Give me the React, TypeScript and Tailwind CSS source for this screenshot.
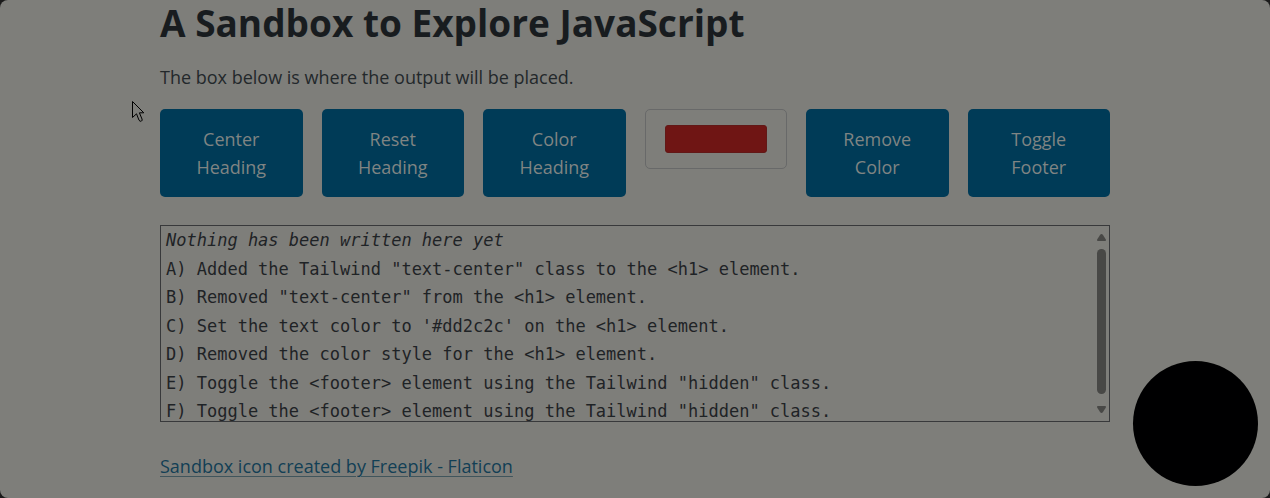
import React, { useState } from "react";

const LOG_LINES = [
  'A) Added the Tailwind "text-center" class to the <h1> element.',
  'B) Removed "text-center" from the <h1> element.',
  "C) Set the text color to '#dd2c2c' on the <h1> element.",
  "D) Removed the color style for the <h1> element.",
  'E) Toggle the <footer> element using the Tailwind "hidden" class.',
  'F) Toggle the <footer> element using the Tailwind "hidden" class.',
];

function ActionButton({ first, second }: { first: string; second: string }) {
  return (
    <button
      type="button"
      className="rounded-[5px] bg-[#003b57] px-4 py-4 text-center text-[18px] leading-7 text-[#7f8483]"
    >
      {first}
      <br />
      {second}
    </button>
  );
}

function ScrollBar() {
  return (
    <div className="flex w-[9px] shrink-0 flex-col items-center py-2" aria-hidden="true">
      <svg width="9" height="7" viewBox="0 0 9 7" fill="#484846">
        <path d="M4.5 0Q5.4 0 6 .9L8.7 5.3Q9.5 7 8 7H1Q-.5 7 .3 5.3L3 .9Q3.6 0 4.5 0Z" />
      </svg>
      <div className="mt-2 mb-3 w-full flex-1 rounded-full bg-[#484846]" />
      <svg width="9" height="7" viewBox="0 0 9 7" fill="#484846">
        <path d="M4.5 7Q5.4 7 6 6.1L8.7 1.7Q9.5 0 8 0H1Q-.5 0 .3 1.7L3 6.1Q3.6 7 4.5 7Z" />
      </svg>
    </div>
  );
}

export default function App() {
  const [color, setColor] = useState("#6f1514");

  return (
    <div className="min-h-screen bg-[#1b1b1b] font-['Open_Sans','Noto_Sans',sans-serif]">
      <div className="relative min-h-screen rounded-lg bg-[#7e7e7a] px-6 text-[#23282b]">
        <main className="mx-auto max-w-[950px]">
          <h1 className="text-[37px] leading-[46px] font-bold text-[#181c1f]">
            A Sandbox to Explore JavaScript
          </h1>
          <p className="mt-[17px] text-[18px] leading-7">
            The box below is where the output will be placed.
          </p>

          <div className="mt-[18px] grid grid-cols-6 items-start gap-[19px]">
            <ActionButton first="Center" second="Heading" />
            <ActionButton first="Reset" second="Heading" />
            <ActionButton first="Color" second="Heading" />
            <input
              type="color"
              aria-label="Heading color"
              value={color}
              onChange={(e) => setColor(e.target.value)}
              className="h-[60px] w-full appearance-none rounded-[5px] border border-[#686969] bg-transparent px-[19px] py-[15px] [&::-webkit-color-swatch]:rounded-[3px] [&::-webkit-color-swatch]:border [&::-webkit-color-swatch]:border-[#621817] [&::-webkit-color-swatch-wrapper]:p-0"
            />
            <ActionButton first="Remove" second="Color" />
            <ActionButton first="Toggle" second="Footer" />
          </div>

          <div className="mt-7 flex h-[197px] overflow-hidden border border-[#38393b] pr-[3px] pl-[5px]">
            <div className="flex h-[199px] min-w-0 flex-1 flex-col justify-between font-['DejaVu_Sans_Mono',monospace] text-[17px] leading-7 whitespace-pre text-[#1f2326]">
              <em>Nothing has been written here yet</em>
              {LOG_LINES.map((line) => (
                <span key={line}>{line}</span>
              ))}
            </div>
            <ScrollBar />
          </div>
        </main>

        <footer className="mx-auto mt-[30px] max-w-[950px] text-[18px] leading-7">
          <a
            href="https://www.flaticon.com/free-icons/sandbox"
            className="text-[#123f55] underline decoration-[#40555c] decoration-1 underline-offset-3"
          >
            Sandbox icon created by Freepik - Flaticon
          </a>
        </footer>

        <div className="absolute right-3 bottom-3 size-[125px] rounded-full bg-[#000001]" />
        <svg
          className="absolute top-[101px] left-[132px]"
          width="13"
          height="22"
          viewBox="0 0 13 22"
          fill="#7e7e7a"
          stroke="#000"
          strokeWidth="1"
          aria-hidden="true"
        >
          <path d="M.5.5V16.5L4.5 12.8L7 19.2Q8 21 9.5 20Q10.6 19.4 10 18L7.4 11.8H11.8Z" />
        </svg>
      </div>
    </div>
  );
}
